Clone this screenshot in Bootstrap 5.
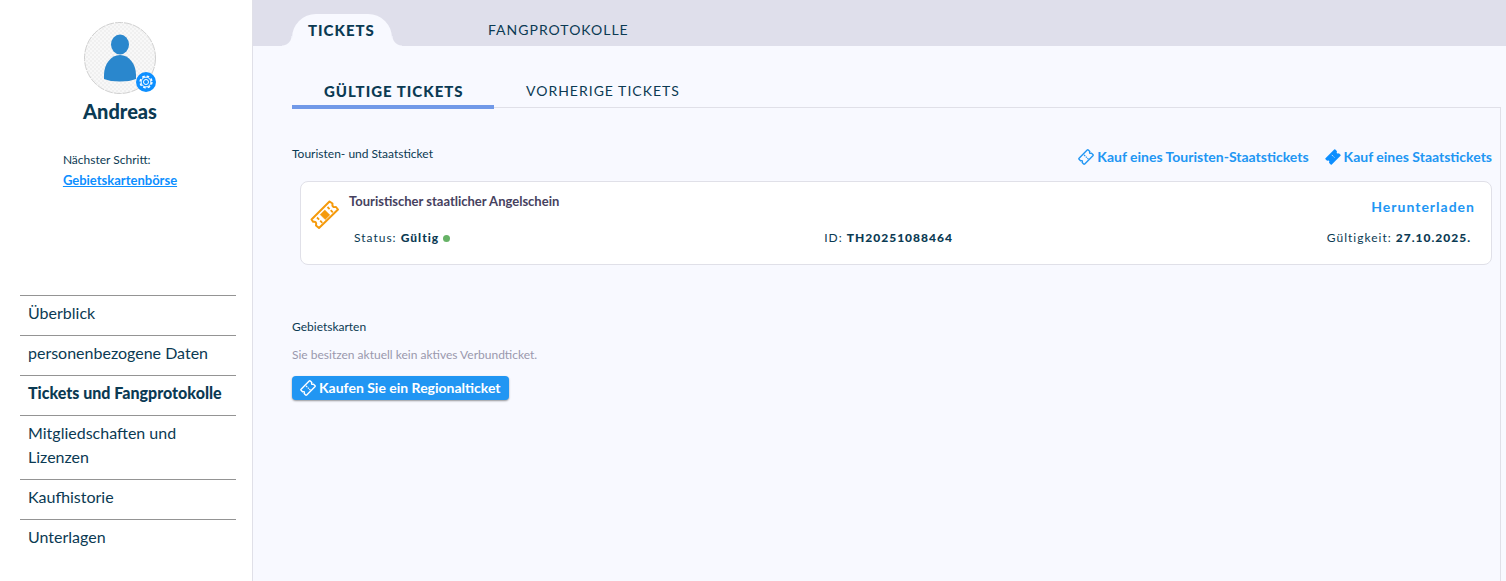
<!DOCTYPE html>
<html lang="de">
<head>
<meta charset="utf-8">
<meta name="viewport" content="width=device-width, initial-scale=1">
<title>Tickets und Fangprotokolle</title>
<link href="https://cdn.jsdelivr.net/npm/bootstrap@5.3.0/dist/css/bootstrap.min.css" rel="stylesheet">
<style>
  :root { --ink: #0b3a53; --sky: #2196f3; --canvas: #f8f9ff; --bar: #dfdfeb; --line: #e0e0e8; }
  body { font-family: Lato, "Open Sans", sans-serif; color: var(--ink); background: var(--canvas); }
  svg { display: block; flex: none; }
  .sidebar { width: 253px; flex: none; border-right: 1px solid var(--line); padding: 22px 16px 0 20px; }
  .profile { width: 200px; min-height: 273px; }
  .avatar { width: 72px; height: 72px; }
  .gear { right: 0; bottom: 2px; width: 20px; height: 20px; background: #0d8fff; border: 0; padding: 0; }
  .user-name { font-size: 20px; line-height: 24px; font-weight: 900; margin: 5px 0 26px; }
  .step { font-size: 12px; line-height: 21px; }
  .step a { color: #0d8fff; font-weight: 700; font-size: 13px; }
  .side-nav a { color: var(--ink); font-size: 16px; line-height: 24px; padding: 5px 8px 10px; border-top: 1px solid #949494; }
  .side-nav a.active { font-weight: 900; }
  .top-tabs { height: 46px; background: var(--bar); padding: 14px 39px 0; gap: 80px; }
  .top-tabs a { color: var(--ink); font-size: 14px; line-height: 32px; letter-spacing: 1px; padding: 0 16px; height: 32px; }
  .top-tabs a.active { background: var(--canvas); border-radius: 24px 24px 0 0; font-size: 15px; font-weight: 900; width: 100px; position: relative; }
  .top-tabs a.active::before, .top-tabs a.active::after { content: ""; position: absolute; bottom: 0; width: 10px; height: 10px; }
  .top-tabs a.active::before { right: 100%; background: radial-gradient(circle at 0 0, var(--bar) 9px, var(--canvas) 10px); }
  .top-tabs a.active::after { left: 100%; background: radial-gradient(circle at 100% 0, var(--bar) 9px, var(--canvas) 10px); }
  .content { margin: 30px 5px 0 39px; }
  .sub-tabs { border-bottom: 1px solid var(--line); height: 32px; }
  .sub-tabs a { color: var(--ink); font-size: 14px; line-height: 30px; letter-spacing: 1px; padding: 0 32px; height: 33px; }
  .sub-tabs a.active { font-size: 15px; font-weight: 900; border-bottom: 4px solid #7199e8; width: 202px; }
  .panel { border-right: 1px solid var(--line); padding: 36px 8px 0 0; }
  .section-title { font-size: 12px; line-height: 20px; margin: 0; font-weight: 400; }
  .buy-links { padding-top: 3px; }
  .buy { color: var(--sky); font-weight: 700; font-size: 14px; line-height: 20px; gap: 3px; }
  .ticket { background: #fff; border: 1px solid var(--line); border-radius: 8px; margin: 14px 0 52px 8px; padding: 9px 16px 16px 8px; }
  .ticket-name { font-size: 13px; line-height: 20px; font-weight: 700; color: #46415e; margin: 0; }
  .download { color: var(--sky); font-weight: 700; font-size: 14px; line-height: 20px; letter-spacing: 1px; margin-top: 6px; }
  .facts { font-size: 12px; line-height: 20px; letter-spacing: 1px; padding: 0 4px 0 5px; margin-top: 11px; }
  .facts b { font-weight: 900; }
  .dot { display: inline-block; width: 7px; height: 7px; border-radius: 50%; background: #66b266; }
  .empty { color: #9a98ad; font-size: 12px; line-height: 20px; margin: 8px 0 11px; }
  .buy-region { background: var(--sky); color: #fff; font-weight: 700; font-size: 14px; line-height: 24px; border: 0; border-radius: 4px; padding: 0 8px; gap: 3px; box-shadow: 0 1px 2px rgba(0,0,0,.4); }
</style>
</head>
<body>
<svg width="0" height="0" class="position-absolute" aria-hidden="true">
  <symbol id="ticket-line" viewBox="0 0 16 16">
    <path d="M9.200 1.100a.8.8 0 0 1 1.100 0l1.500 1.500q-.8 2.300 1.700 1.700l1.400 1.300a.8.8 0 0 1 0 1.100l-8.200 8.200a.8.8 0 0 1-1.100 0l-1.400-1.400q.8-2.400-1.700-1.800l-1.400-1.400a.8.8 0 0 1 0-1.100z" fill="none" stroke="currentColor" stroke-width="1.400" stroke-linejoin="round"/>
    <path d="M6 5.800l1.200 1.200M7.800 7.600l1 1M9.400 9.200l1 1" stroke="currentColor" stroke-width="1.200"/>
  </symbol>
</svg>
<div class="d-flex min-vh-100">
  <aside class="sidebar bg-white">
    <div class="profile d-flex flex-column align-items-center">
      <div class="avatar position-relative">
        <svg width="72" height="72" viewBox="0 0 72 72" role="img" aria-label="Profilbild">
          <defs><pattern id="weave" width="4" height="4" patternUnits="userSpaceOnUse"><rect width="4" height="4" fill="#f8f8f8"/><path d="M0 0h2v2h2v2h-2v-2h-2z" fill="#f0f0f0"/></pattern></defs>
          <circle cx="36" cy="36" r="35.500" fill="url(#weave)" stroke="#d0d0d0" stroke-dasharray="8 1"/>
          <ellipse cx="36" cy="22.500" rx="9" ry="10" fill="#2a87cd"/>
          <path d="M20 57V53C20 42 27 33 36 33S52 42 52 53V57Q46 59.500 36 59.500T20 57Z" fill="#2a87cd"/>
        </svg>
        <button type="button" class="gear position-absolute rounded-circle" aria-label="Einstellungen">
          <svg width="20" height="20" viewBox="0 0 20 20" fill="none" stroke="#fff">
            <circle cx="10" cy="10" r="5.900" stroke-width="1.400" stroke-dasharray="2.600 2.034"/>
            <circle cx="10" cy="10" r="4.900" stroke-width="1"/>
            <circle cx="10" cy="10" r="2.500" stroke-width="1"/>
          </svg>
        </button>
      </div>
      <h1 class="user-name">Andreas</h1>
      <div class="step">Nächster Schritt:<br><a href="#">Gebietskartenbörse</a></div>
    </div>
    <nav class="side-nav d-flex flex-column" aria-label="Konto">
      <a class="text-decoration-none" href="#">Überblick</a>
      <a class="text-decoration-none" href="#">personenbezogene Daten</a>
      <a class="text-decoration-none text-nowrap active" href="#" aria-current="page">Tickets und Fangprotokolle</a>
      <a class="text-decoration-none" href="#">Mitgliedschaften und Lizenzen</a>
      <a class="text-decoration-none" href="#">Kaufhistorie</a>
      <a class="text-decoration-none" href="#">Unterlagen</a>
    </nav>
  </aside>
  <main class="flex-grow-1 d-flex flex-column">
    <nav class="top-tabs d-flex" aria-label="Bereiche">
      <a class="text-decoration-none active" href="#" aria-current="page">TICKETS</a>
      <a class="text-decoration-none" href="#">FANGPROTOKOLLE</a>
    </nav>
    <div class="content flex-grow-1 d-flex flex-column">
      <nav class="sub-tabs d-flex" aria-label="Tickets">
        <a class="text-decoration-none text-nowrap active" href="#" aria-current="page">GÜLTIGE TICKETS</a>
        <a class="text-decoration-none text-nowrap" href="#">VORHERIGE TICKETS</a>
      </nav>
      <div class="panel flex-grow-1">
        <div class="d-flex flex-wrap justify-content-between">
          <h2 class="section-title">Touristen- und Staatsticket</h2>
          <div class="buy-links d-flex flex-wrap gap-3">
            <a class="buy d-flex align-items-center text-decoration-none" href="#"><svg width="16" height="16" aria-hidden="true"><use href="#ticket-line"/></svg>Kauf eines Touristen-Staatstickets</a>
            <a class="buy d-flex align-items-center text-decoration-none" href="#"><svg width="16" height="16" viewBox="0 0 16 16" aria-hidden="true"><path d="M9.200.500a.8.8 0 0 1 1.100 0l1.700 1.700q-1.100 2.800 1.900 2l1.600 1.500a.8.8 0 0 1 0 1.100l-8.700 8.700a.8.8 0 0 1-1.100 0l-1.700-1.700q1.100-2.900-1.900-2L.5 10.300a.8.8 0 0 1 0-1.100z" fill="#0d8fff"/><path d="M6.800 5.900l.9.900M8.500 7.600l.8.800" stroke="#fff" stroke-width=".9"/></svg>Kauf eines Staatstickets</a>
          </div>
        </div>
        <article class="ticket">
          <div class="d-flex">
            <svg width="32" height="32" viewBox="0 0 32 32" class="mt-2" fill="none" stroke="#f59a0b" stroke-width="2" stroke-linejoin="round" aria-hidden="true">
              <path d="M20.500 2.500 2.500 20.500l1.700 2.300q3.800-.6 2.800 3.700l3 2.500L29 10.500l-2-2.500q-4.300.8-3.500-3.500z"/>
              <path d="M15.800 11l5 5-4.600 4.600-5-5z" fill="#f59a0b" stroke-width=".5"/>
              <path d="M18.500 8l5.500 5.500M8 18.500l5.500 5.500" stroke-width="1.800" stroke-dasharray="3 1.500"/>
            </svg>
            <div class="flex-grow-1 ms-2">
              <div class="d-flex justify-content-between">
                <h3 class="ticket-name">Touristischer staatlicher Angelschein</h3>
                <a class="download text-decoration-none" href="#">Herunterladen</a>
              </div>
              <div class="facts d-flex justify-content-between flex-wrap">
                <span class="fact">Status: <b>Gültig</b> <i class="dot"></i></span>
                <span class="fact">ID: <b>TH20251088464</b></span>
                <span class="fact">Gültigkeit: <b>27.10.2025.</b></span>
              </div>
            </div>
          </div>
        </article>
        <h2 class="section-title">Gebietskarten</h2>
        <p class="empty">Sie besitzen aktuell kein aktives Verbundticket.</p>
        <button type="button" class="buy-region d-inline-flex align-items-center"><svg width="16" height="16" aria-hidden="true"><use href="#ticket-line"/></svg>Kaufen Sie ein Regionalticket</button>
      </div>
    </div>
  </main>
</div>
<script src="https://cdn.jsdelivr.net/npm/bootstrap@5.3.0/dist/js/bootstrap.bundle.min.js"></script>
</body>
</html>
